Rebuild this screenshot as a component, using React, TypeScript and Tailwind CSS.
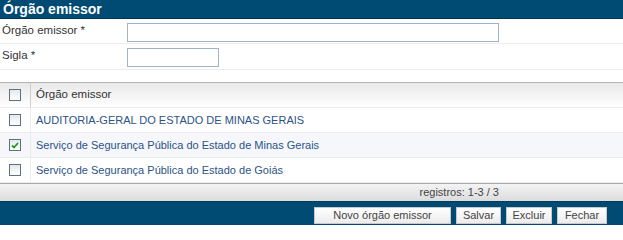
import React, { useState } from 'react';

const rows = [
  { id: 1, nome: 'AUDITORIA-GERAL DO ESTADO DE MINAS GERAIS', checked: false },
  { id: 2, nome: 'Serviço de Segurança Pública do Estado de Minas Gerais', checked: true },
  { id: 3, nome: 'Serviço de Segurança Pública do Estado de Goiás', checked: false },
];

const Check = ({ checked }: { checked: boolean }) => (
  <span className="flex h-[12px] w-[12px] items-center justify-center border border-[#5d7184] bg-gradient-to-b from-[#e4e8ec] to-white">
    {checked && (
      <svg width="8" height="7" viewBox="0 0 8 7">
        <path d="M1 3.5 L3 5.5 L7 1" fill="none" stroke="#1f9a1f" strokeWidth="1.8" />
      </svg>
    )}
  </span>
);

const Button = ({ label, w }: { label: string; w: string }) => (
  <button className={`h-[17px] ${w} border border-[#c9c9c9] bg-gradient-to-b from-white to-[#ececec] text-[11px] leading-none text-[#444]`}>
    {label}
  </button>
);

export default function App() {
  const [items] = useState(rows);

  return (
    <div className="h-[227px] w-[623px] overflow-hidden bg-white font-['Liberation_Sans',Arial,sans-serif]">
      <div className="h-[19px] border-b border-[#00324f] bg-[#004b74] pl-[3px] text-[14px] font-bold leading-[18px] text-white">
        Órgão emissor
      </div>

      <div className="flex h-[25px] items-start border-b border-[#ececec]">
        <label className="w-[127px] pl-[2px] pt-[3px] text-[11.5px] text-[#333]">Órgão emissor *</label>
        <input className="mt-[4px] h-[19px] w-[372px] border border-[#9eb3c8] bg-white outline-none" />
      </div>
      <div className="flex h-[26px] items-start border-b border-[#ececec]">
        <label className="w-[127px] pl-[2px] pt-[3px] text-[11.5px] text-[#333]">Sigla *</label>
        <input className="mt-[4px] h-[19px] w-[92px] border border-[#9eb3c8] bg-white outline-none" />
      </div>

      <div className="h-[12px]" />

      <div className="border-t border-[#b4b4b4]">
        <div className="flex h-[25px] items-center border-b border-[#ececec] bg-gradient-to-b from-[#e8e8e8] to-white">
          <div className="flex h-full w-[31px] items-center justify-center border-r border-[#cfcfcf]">
            <Check checked={false} />
          </div>
          <span className="pl-[5px] text-[11.5px] text-[#333]">Órgão emissor</span>
        </div>
        {items.map((r, i) => (
          <div
            key={r.id}
            className={`flex h-[25px] items-center border-b border-[#ececec] ${i === 1 ? 'bg-[#f5f7fa]' : 'bg-white'}`}
          >
            <div className="flex h-full w-[31px] items-center justify-center border-r border-[#ececec]">
              <Check checked={r.checked} />
            </div>
            <span className="pl-[5px] text-[11px] text-[#2c5288]">{r.nome}</span>
          </div>
        ))}
      </div>

      <div className="h-[18px] border-t border-[#a9a9a9] bg-gradient-to-b from-[#f4f4f4] to-[#dcdcdc] pr-[124px] text-right text-[11px] leading-[17px] text-[#444]">
        registros: 1-3 / 3
      </div>

      <div className="flex h-[24px] items-start justify-end gap-[5px] border-t border-[#003a5c] bg-[#004b74] pr-[16px] pt-[5px]">
        <Button label="Novo órgão emissor" w="w-[137px]" />
        <Button label="Salvar" w="w-[45px]" />
        <Button label="Excluir" w="w-[46px]" />
        <Button label="Fechar" w="w-[50px]" />
      </div>
    </div>
  );
}
